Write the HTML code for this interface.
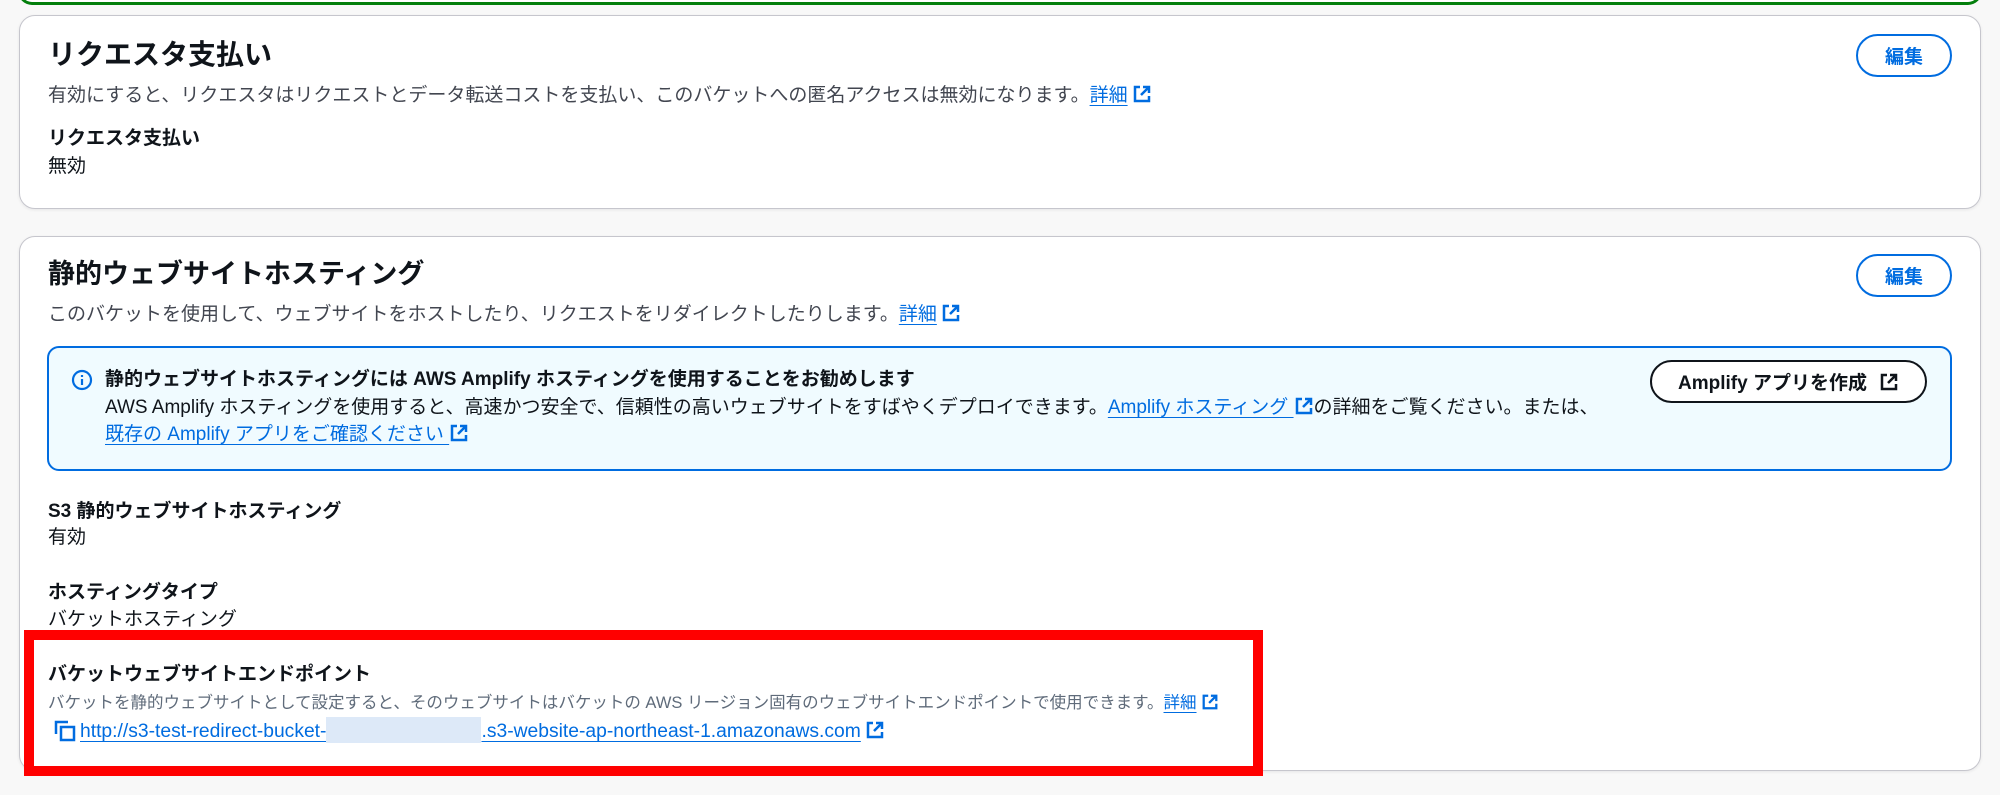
<!DOCTYPE html>
<html><head><meta charset="utf-8"><style>
*{margin:0;padding:0;box-sizing:border-box}
body{width:2000px;height:795px;background:#f8f8f8;position:relative;overflow:hidden;font-family:"Liberation Sans","Noto Sans CJK JP",sans-serif;color:#0f141a}
.a{position:absolute;white-space:nowrap}
.card{position:absolute;background:#fff;border:1px solid #c6c6cd;border-radius:16px;box-shadow:0 1px 3px rgba(0,7,22,.08)}
.t{font-size:28px;font-weight:bold;line-height:36px}
.d{font-size:19px;line-height:26px;color:#424650}
.l{font-size:19px;font-weight:bold;line-height:26px}
.v{font-size:19px;line-height:26px}
.lk{color:#006ce0;text-decoration:underline;text-underline-offset:4px}
.btn{position:absolute;border:2px solid #006ce0;border-radius:22px;color:#006ce0;font-weight:bold;font-size:19px;display:flex;align-items:center;justify-content:center;background:#fff}
svg.ex{vertical-align:-3px;margin-left:4px}
</style></head><body>
<div class="a" style="left:18px;top:-20px;width:1964px;height:25px;border:3px solid #037f0c;border-top:none;border-radius:0 0 14px 14px;background:#fff"></div>

<div class="card" style="left:19px;top:15px;width:1962px;height:194px"></div>
<div class="a t" style="left:48px;top:37px">リクエスタ支払い</div>
<div class="a d" style="left:48px;top:83px">有効にすると、リクエスタはリクエストとデータ転送コストを支払い、このバケットへの匿名アクセスは無効になります。<span class="lk">詳細</span><svg class="ex" width="20" height="20" viewBox="0 0 20 20" fill="none" stroke="#006ce0" stroke-width="2.5"><path d="M8 3H3v14h14v-5M11 3h6v6M17 3l-8 8"/></svg></div>
<div class="a l" style="left:48px;top:126px">リクエスタ支払い</div>
<div class="a v" style="left:48px;top:154px">無効</div>
<div class="btn" style="left:1856px;top:34px;width:96px;height:43px">編集</div>

<div class="card" style="left:19px;top:236px;width:1962px;height:535px"></div>
<div class="a t" style="left:48px;top:256px;font-size:27px">静的ウェブサイトホスティング</div>
<div class="a d" style="left:48px;top:302px">このバケットを使用して、ウェブサイトをホストしたり、リクエストをリダイレクトしたりします。<span class="lk">詳細</span><svg class="ex" width="20" height="20" viewBox="0 0 20 20" fill="none" stroke="#006ce0" stroke-width="2.5"><path d="M8 3H3v14h14v-5M11 3h6v6M17 3l-8 8"/></svg></div>
<div class="btn" style="left:1856px;top:254px;width:96px;height:43px">編集</div>

<div class="a" style="left:47px;top:346px;width:1905px;height:125px;background:#f0fbff;border:2px solid #006ce0;border-radius:12px"></div>
<svg class="a" style="left:71px;top:369px" width="22" height="22" viewBox="0 0 22 22" fill="none" stroke="#006ce0" stroke-width="2.2"><circle cx="11" cy="11" r="9"/><path d="M11 10v6M11 6v2"/></svg>
<div class="a l" style="left:105px;top:367px;color:#0f141a">静的ウェブサイトホスティングには AWS Amplify ホスティングを使用することをお勧めします</div>
<div class="a v" style="left:105px;top:395px">AWS Amplify ホスティングを使用すると、高速かつ安全で、信頼性の高いウェブサイトをすばやくデプロイできます。<span class="lk">Amplify ホスティング </span><svg class="ex" style="margin-left:0" width="20" height="20" viewBox="0 0 20 20" fill="none" stroke="#006ce0" stroke-width="2.5"><path d="M8 3H3v14h14v-5M11 3h6v6M17 3l-8 8"/></svg>の詳細をご覧ください。または、</div>
<div class="a v" style="left:105px;top:422px"><span class="lk">既存の Amplify アプリをご確認ください </span><svg class="ex" style="margin-left:0" width="20" height="20" viewBox="0 0 20 20" fill="none" stroke="#006ce0" stroke-width="2.5"><path d="M8 3H3v14h14v-5M11 3h6v6M17 3l-8 8"/></svg></div>
<div class="btn" style="left:1650px;top:360px;width:277px;height:43px;border-color:#0f141a;color:#0f141a">Amplify アプリを作成<svg style="margin-left:12px" width="20" height="20" viewBox="0 0 20 20" fill="none" stroke="#0f141a" stroke-width="2.5"><path d="M8 3H3v14h14v-5M11 3h6v6M17 3l-8 8"/></svg></div>

<div class="a l" style="left:48px;top:499px">S3 静的ウェブサイトホスティング</div>
<div class="a v" style="left:48px;top:525px">有効</div>
<div class="a l" style="left:48px;top:580px">ホスティングタイプ</div>
<div class="a v" style="left:48px;top:607px">バケットホスティング</div>

<div class="a" style="left:24px;top:630px;width:1239px;height:146px;border:10px solid #ff0000;background:#fff"></div>
<div class="a l" style="left:48px;top:662px">バケットウェブサイトエンドポイント</div>
<div class="a" style="left:48px;top:691px;font-size:16.5px;line-height:24px;color:#5f6b7a">バケットを静的ウェブサイトとして設定すると、そのウェブサイトはバケットの AWS リージョン固有のウェブサイトエンドポイントで使用できます。<span class="lk">詳細</span><svg class="ex" width="18" height="18" viewBox="0 0 20 20" fill="none" stroke="#006ce0" stroke-width="2.5"><path d="M8 3H3v14h14v-5M11 3h6v6M17 3l-8 8"/></svg></div>
<svg class="a" style="left:54px;top:720px" width="22" height="22" viewBox="0 0 22 22" fill="none" stroke="#006ce0" stroke-width="2.5"><path d="M2 14V2h12"/><rect x="7" y="7" width="13" height="13"/></svg>
<div class="a v" style="left:80px;top:717px;color:#006ce0;font-size:19.3px"><span class="lk">http://s3-test-redirect-bucket-<span style="display:inline-block;width:155px;height:26px;background:#dde9f8;vertical-align:-6px"></span>.s3-website-ap-northeast-1.amazonaws.com</span><svg class="ex" width="20" height="20" viewBox="0 0 20 20" fill="none" stroke="#006ce0" stroke-width="2.5"><path d="M8 3H3v14h14v-5M11 3h6v6M17 3l-8 8"/></svg></div>
</body></html>
